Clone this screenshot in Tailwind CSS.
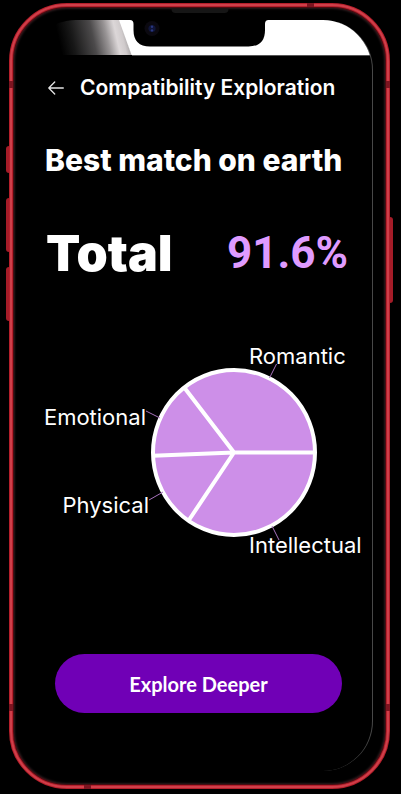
<!DOCTYPE html>
<html lang="en">
<head>
<meta charset="utf-8">
<meta name="viewport" content="width=device-width, initial-scale=1">
<title>Compatibility Exploration</title>
<script src="https://cdn.jsdelivr.net/npm/@tailwindcss/browser@4"></script>
</head>
<body class="flex min-h-screen bg-black pt-[3px] pr-[11px] pb-[5px] pl-[9px] font-['Inter',sans-serif] text-white">
<div class="relative flex flex-1 flex-col rounded-[58px] border-4 border-[#b51f2b] px-[13px] pt-[13px] pb-[14px] shadow-[inset_0_0_0_1px_#4a0c12,inset_0_0_2px_2px_#2a1a1c]">
  <!-- bright edge of the metal band -->
  <span class="pointer-events-none absolute -inset-[3px] rounded-[57px] border-2 border-[#cf3f4a]"></span>
  <!-- side keys -->
  <span class="absolute top-[139px] -left-[7px] h-[27px] w-[3px] rounded-l-sm bg-[#a51c28]"></span>
  <span class="absolute top-[191px] -left-[7px] h-[54px] w-[3px] rounded-l-sm bg-[#a51c28]"></span>
  <span class="absolute top-[260px] -left-[7px] h-[54px] w-[3px] rounded-l-sm bg-[#a51c28]"></span>
  <span class="absolute top-[210px] -right-[7px] h-[86px] w-[3px] rounded-r-sm bg-[#a51c28]"></span>
  <!-- antenna bands -->
  <span class="absolute top-[74px] -left-1 h-[7px] w-1 bg-[#7d1420]"></span>
  <span class="absolute top-[74px] -right-1 h-[7px] w-1 bg-[#7d1420]"></span>
  <span class="absolute bottom-[74px] -left-1 h-[7px] w-1 bg-[#7d1420]"></span>
  <span class="absolute bottom-[74px] -right-1 h-[7px] w-1 bg-[#7d1420]"></span>
  <span class="absolute -top-1 right-[72px] h-1 w-[7px] bg-[#7d1420]"></span>
  <span class="absolute -bottom-1 left-[71px] h-1 w-[7px] bg-[#7d1420]"></span>
  <!-- earpiece -->
  <span class="absolute top-[2px] left-1/2 h-1 w-[57px] -translate-x-1/2 rounded-b-sm bg-[#161616]"></span>

  <main class="flex flex-1 flex-col overflow-hidden rounded-[50px] border-r border-[#484848]">
    <svg class="block w-full" viewBox="26 20 346 36" aria-hidden="true">
      <defs>
        <linearGradient id="glare" gradientUnits="userSpaceOnUse" x1="60" y1="45" x2="126" y2="30">
          <stop offset="0" stop-color="#000"/>
          <stop offset=".2" stop-color="#181818"/>
          <stop offset=".5" stop-color="#4c4a4b"/>
          <stop offset=".7" stop-color="#989495"/>
          <stop offset=".84" stop-color="#dcd7d8"/>
          <stop offset=".93" stop-color="#d0cbcc"/>
          <stop offset="1" stop-color="#aaa7a8"/>
        </linearGradient>
      </defs>
      <path d="M50 20H120L132 55H50Z" fill="url(#glare)"/>
      <path d="M119 20H372V55H131.500Z" fill="#fff"/>
      <path d="M132 55.500H372" stroke="#555" stroke-width="1"/>
      <path d="M130 19V20Q133.500 20 133.500 24V30Q133.500 46.500 150 46.500H248.500Q265 46.500 265 30V24Q265 20 268.500 20V19Z" fill="#000"/>
      <circle cx="152" cy="28.500" r="7.500" fill="#0b0910"/>
      <circle cx="152" cy="28.500" r="3.600" fill="#10153a"/>
      <circle cx="152" cy="26.800" r="1.200" fill="#29377f"/>
      <circle cx="152" cy="30.400" r="1.200" fill="#29377f"/>
    </svg>

    <header class="flex h-16 items-center gap-4 pl-[22px]">
      <button type="button" aria-label="Back" class="block">
        <svg class="block h-4 w-4" viewBox="0 0 16 16" fill="none" stroke="#e4e4e4" stroke-width="1.300" stroke-linecap="round" stroke-linejoin="round"><path d="M15.300 8H.8M6.700 2L.8 8L6.700 14"/></svg>
      </button>
      <h1 class="text-[21px] leading-6 font-semibold whitespace-nowrap">Compatibility Exploration</h1>
    </header>

    <h2 class="flex h-20 items-center pl-[19px] text-[30px] leading-9 font-extrabold whitespace-nowrap">Best match on earth</h2>

    <div class="flex h-[106px] items-center justify-between pr-[24px] pl-5 leading-[56px]">
      <span class="text-[50px] font-black">Total</span>
      <span class="font-['Roboto',sans-serif] text-[44px] font-bold text-[#df9bff]">91.6%</span>
    </div>

    <svg class="mt-[34px] block w-full" viewBox="26 340 346 225" role="img" aria-label="Compatibility by category">
      <g fill="#cd8fe8" stroke="#fff" stroke-width="4">
        <ellipse cx="234" cy="452.500" rx="81" ry="82.500"/>
        <path d="M315 452.500H234L185 388.500M234 452.500L153 455.800M234 452.500L189 520" fill="none" stroke-linejoin="round"/>
      </g>
      <path d="M146 411L160 418M149 500L163 492M276.500 364L269.500 378M272 526L279 540" stroke="#a873bd" stroke-width="1" fill="none"/>
      <g class="text-[22px]" fill="#fff">
        <text x="249" y="364">Romantic</text>
        <text x="146" y="425" text-anchor="end">Emotional</text>
        <text x="149" y="513" text-anchor="end">Physical</text>
        <text x="249" y="553">Intellectual</text>
      </g>
    </svg>

    <button type="button" class="mt-[89px] mr-[30px] ml-[29px] h-[59px] rounded-full bg-[#7000b6] font-['Lato',sans-serif] text-xl leading-6 font-bold">Explore Deeper</button>
  </main>
</div>
</body>
</html>
